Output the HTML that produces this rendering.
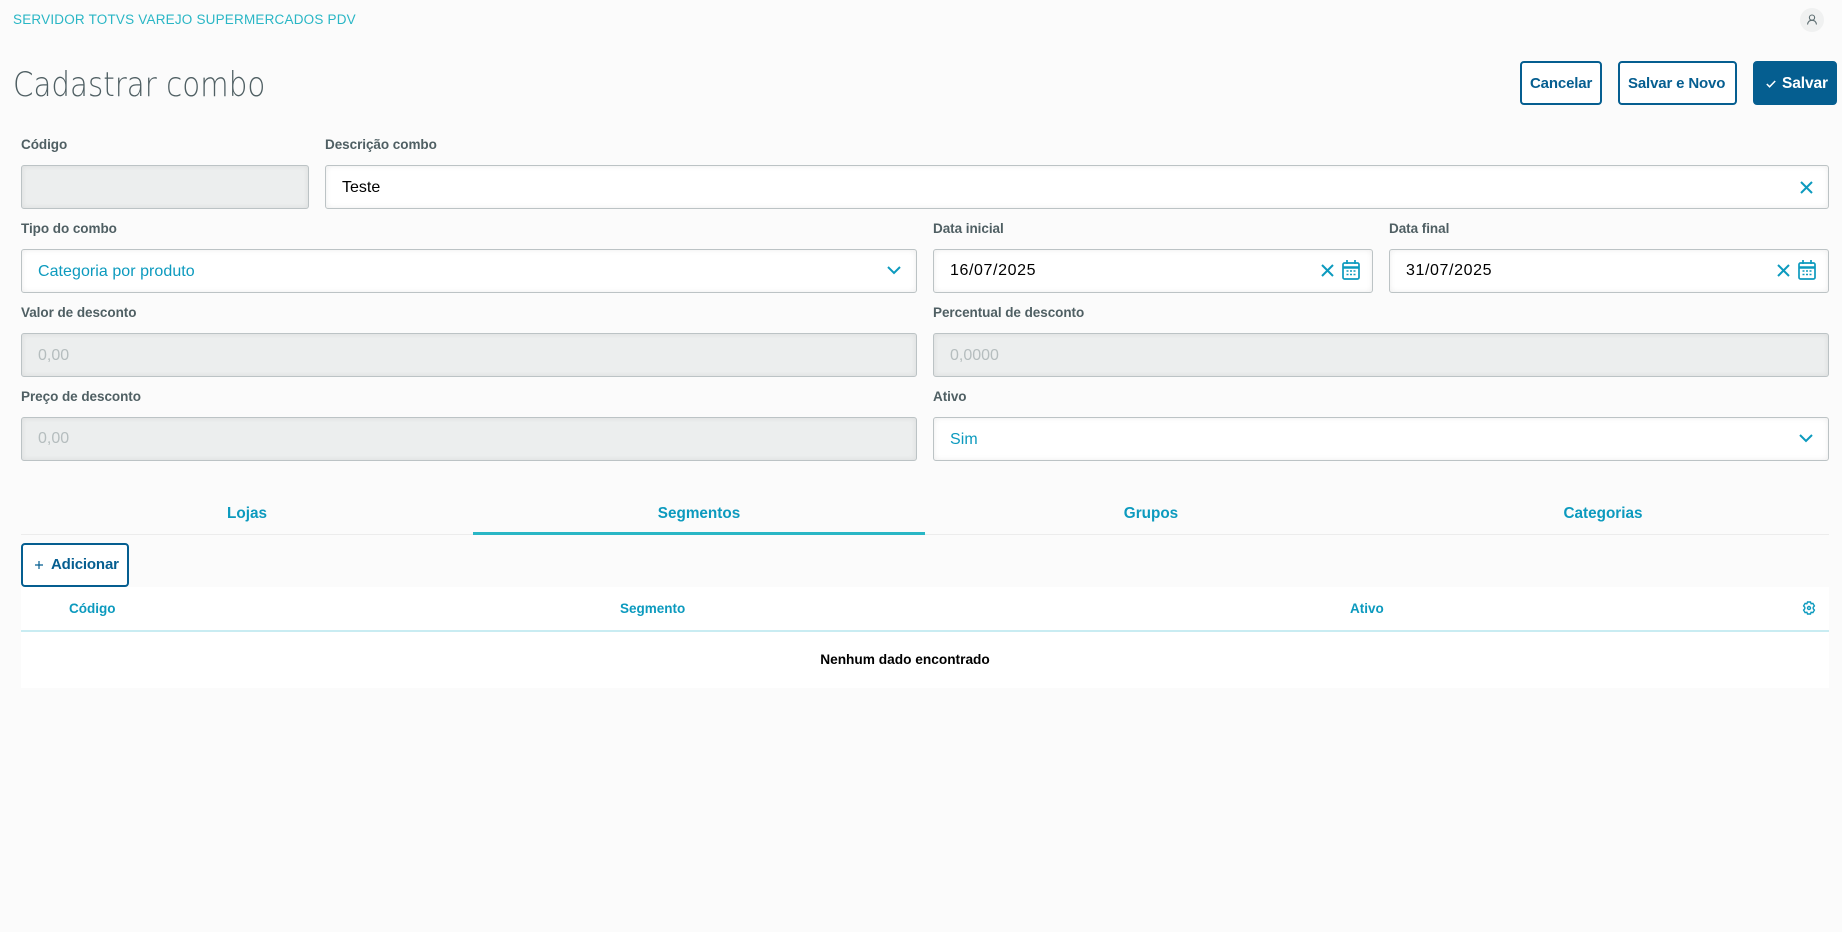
<!DOCTYPE html>
<html lang="pt-BR">
<head>
<meta charset="utf-8">
<title>Cadastrar combo</title>
<style>
html,body{margin:0;padding:0;width:1842px;height:932px;overflow:hidden;background:#fbfbfb;font-family:"Liberation Sans",sans-serif;}
.a{position:absolute;white-space:nowrap;line-height:20px;}
.lbl{font-size:13.5px;font-weight:700;color:#4f5f63;letter-spacing:-.05px;}
.box{position:absolute;height:44px;box-sizing:border-box;border:1px solid #bcc3c5;border-radius:3px;background:#fff;box-shadow:inset 0 0 6px rgba(0,0,0,.08);}
.box.dis{background:#eceeee;}
.val{font-size:16px;color:#000;}
.teal{font-size:16px;color:#0c9abe;letter-spacing:.05px;}
.ph{font-size:16px;color:#b5bdbe;}
.btn{position:absolute;height:44px;box-sizing:border-box;border:2px solid #055e90;border-radius:4px;background:#fff;}
.bt{font-size:15px;font-weight:700;color:#055e90;letter-spacing:-.15px;}
.tab{font-size:15.3px;font-weight:700;color:#0c9abe;text-align:center;width:452px;}
.th{font-size:13.5px;font-weight:700;color:#0c9abe;}
svg{position:absolute;overflow:visible;}
</style>
</head>
<body>
<div class="a" style="left:13px;top:10px;font-size:13.5px;color:#29b6c5;letter-spacing:.2px;">SERVIDOR TOTVS VAREJO SUPERMERCADOS PDV</div>

<div style="position:absolute;left:1800px;top:8px;width:24px;height:24px;border-radius:50%;background:#f0f1f1;"></div>
<svg style="left:1806px;top:14px" width="12" height="12" viewBox="0 0 12 12" fill="none" stroke="#5f6f73" stroke-width="1.1"><circle cx="6" cy="3.600" r="2.600"/><path d="M1.500 10.500c.4-2.600 2-4.200 4.500-4.200s4.100 1.600 4.500 4.200"/></svg>

<div class="a" style="left:13px;top:65px;line-height:40px;font-size:34px;color:#4f5f63;font-family:'DejaVu Sans','Liberation Sans',sans-serif;font-weight:200;transform-origin:0 50%;transform:scaleX(.862);">Cadastrar combo</div>

<div class="btn" style="left:1520px;top:61px;width:82px;"></div>
<div class="a bt" style="left:1530px;top:74px;">Cancelar</div>
<div class="btn" style="left:1618px;top:61px;width:119px;"></div>
<div class="a bt" style="left:1628px;top:74px;">Salvar e Novo</div>
<div class="btn" style="left:1753px;top:61px;width:84px;background:#055e90;"></div>
<svg style="left:1766px;top:80px" width="10" height="8" viewBox="0 0 10 8" fill="none" stroke="#fff" stroke-width="1.500"><path d="M.8 4l2.800 2.800L9.200 1"/></svg>
<div class="a bt" style="left:1782px;top:74px;color:#fff;font-size:15.500px;letter-spacing:-.1px;">Salvar</div>

<div class="a lbl" style="left:21px;top:135px;">Código</div>
<div class="box dis" style="left:21px;top:165px;width:288px;"></div>
<div class="a lbl" style="left:325px;top:135px;">Descrição combo</div>
<div class="box" style="left:325px;top:165px;width:1504px;"></div>
<div class="a val" style="left:342px;top:178px;">Teste</div>
<svg style="left:1800px;top:181px" width="13" height="13" viewBox="0 0 13 13" fill="none" stroke="#0c9abe" stroke-width="2"><path d="M1 1l11 11M12 1L1 12"/></svg>

<div class="a lbl" style="left:21px;top:219px;">Tipo do combo</div>
<div class="box" style="left:21px;top:249px;width:896px;"></div>
<div class="a teal" style="left:38px;top:262px;">Categoria por produto</div>
<svg style="left:887px;top:266px" width="14" height="8" viewBox="0 0 14 8" fill="none" stroke="#0c9abe" stroke-width="2"><path d="M1 1l6 6 6-6"/></svg>

<div class="a lbl" style="left:933px;top:219px;">Data inicial</div>
<div class="box" style="left:933px;top:249px;width:440px;"></div>
<div class="a val" style="left:950px;top:261px;letter-spacing:.6px;">16/07/2025</div>
<svg style="left:1321px;top:264px" width="13" height="13" viewBox="0 0 13 13" fill="none" stroke="#0c9abe" stroke-width="2"><path d="M1 1l11 11M12 1L1 12"/></svg>
<svg style="left:1342px;top:260px" width="18" height="20" viewBox="0 0 18 20" fill="none" stroke="#0c9abe" stroke-width="1.700"><rect x="1" y="3" width="16" height="16" rx="1.500"/><path d="M1 7.500h16" stroke-width="2.500"/><path d="M5 0v4M13 0v4"/><path d="M4.500 11h2M8 11h2M11.500 11h2M4.500 14.500h2M8 14.500h2M11.500 14.500h2" stroke-width="1.500"/></svg>

<div class="a lbl" style="left:1389px;top:219px;">Data final</div>
<div class="box" style="left:1389px;top:249px;width:440px;"></div>
<div class="a val" style="left:1406px;top:261px;letter-spacing:.6px;">31/07/2025</div>
<svg style="left:1777px;top:264px" width="13" height="13" viewBox="0 0 13 13" fill="none" stroke="#0c9abe" stroke-width="2"><path d="M1 1l11 11M12 1L1 12"/></svg>
<svg style="left:1798px;top:260px" width="18" height="20" viewBox="0 0 18 20" fill="none" stroke="#0c9abe" stroke-width="1.700"><rect x="1" y="3" width="16" height="16" rx="1.500"/><path d="M1 7.500h16" stroke-width="2.500"/><path d="M5 0v4M13 0v4"/><path d="M4.500 11h2M8 11h2M11.500 11h2M4.500 14.500h2M8 14.500h2M11.500 14.500h2" stroke-width="1.500"/></svg>

<div class="a lbl" style="left:21px;top:303px;">Valor de desconto</div>
<div class="box dis" style="left:21px;top:333px;width:896px;"></div>
<div class="a ph" style="left:38px;top:346px;">0,00</div>
<div class="a lbl" style="left:933px;top:303px;">Percentual de desconto</div>
<div class="box dis" style="left:933px;top:333px;width:896px;"></div>
<div class="a ph" style="left:950px;top:346px;">0,0000</div>

<div class="a lbl" style="left:21px;top:387px;">Preço de desconto</div>
<div class="box dis" style="left:21px;top:417px;width:896px;"></div>
<div class="a ph" style="left:38px;top:429px;">0,00</div>
<div class="a lbl" style="left:933px;top:387px;">Ativo</div>
<div class="box" style="left:933px;top:417px;width:896px;"></div>
<div class="a teal" style="left:950px;top:430px;">Sim</div>
<svg style="left:1799px;top:434px" width="14" height="8" viewBox="0 0 14 8" fill="none" stroke="#0c9abe" stroke-width="2"><path d="M1 1l6 6 6-6"/></svg>

<div class="a tab" style="left:21px;top:504px;">Lojas</div>
<div class="a tab" style="left:473px;top:504px;">Segmentos</div>
<div class="a tab" style="left:925px;top:504px;">Grupos</div>
<div class="a tab" style="left:1377px;top:504px;">Categorias</div>
<div style="position:absolute;left:21px;top:534px;width:1808px;height:1px;background:#ececec;"></div>
<div style="position:absolute;left:473px;top:532px;width:452px;height:3px;background:#29b6c5;"></div>

<div class="btn" style="left:21px;top:543px;width:108px;"></div>
<svg style="left:35px;top:561px" width="8" height="8" viewBox="0 0 8 8" fill="none" stroke="#055e90" stroke-width="1.200"><path d="M4 0v8M0 4h8"/></svg>
<div class="a bt" style="left:51px;top:555px;">Adicionar</div>

<div style="position:absolute;left:21px;top:587px;width:1808px;height:101px;background:#fff;"></div>
<div style="position:absolute;left:21px;top:630px;width:1808px;height:2px;background:#c9ecf2;"></div>
<div class="a th" style="left:69px;top:599px;">Código</div>
<div class="a th" style="left:620px;top:599px;">Segmento</div>
<div class="a th" style="left:1350px;top:599px;">Ativo</div>
<svg style="left:1802px;top:601px" width="14" height="14" viewBox="0 0 14 14" fill="none" stroke="#0c9abe" stroke-width="1.400"><path d="M5.500 1h3l.6 1.700 1.800-.3 1.500 2.500-1.200 1.400v1.400l1.200 1.400-1.500 2.500-1.800-.3L8.500 13h-3l-.6-1.700-1.800.3-1.500-2.500 1.200-1.400V6.300L1.600 4.900l1.500-2.500 1.800.3z"/><circle cx="7" cy="7" r="1.500"/></svg>
<div class="a" style="left:21px;width:1768px;top:650px;text-align:center;font-size:13.700px;font-weight:700;color:#000;">Nenhum dado encontrado</div>
</body>
</html>
